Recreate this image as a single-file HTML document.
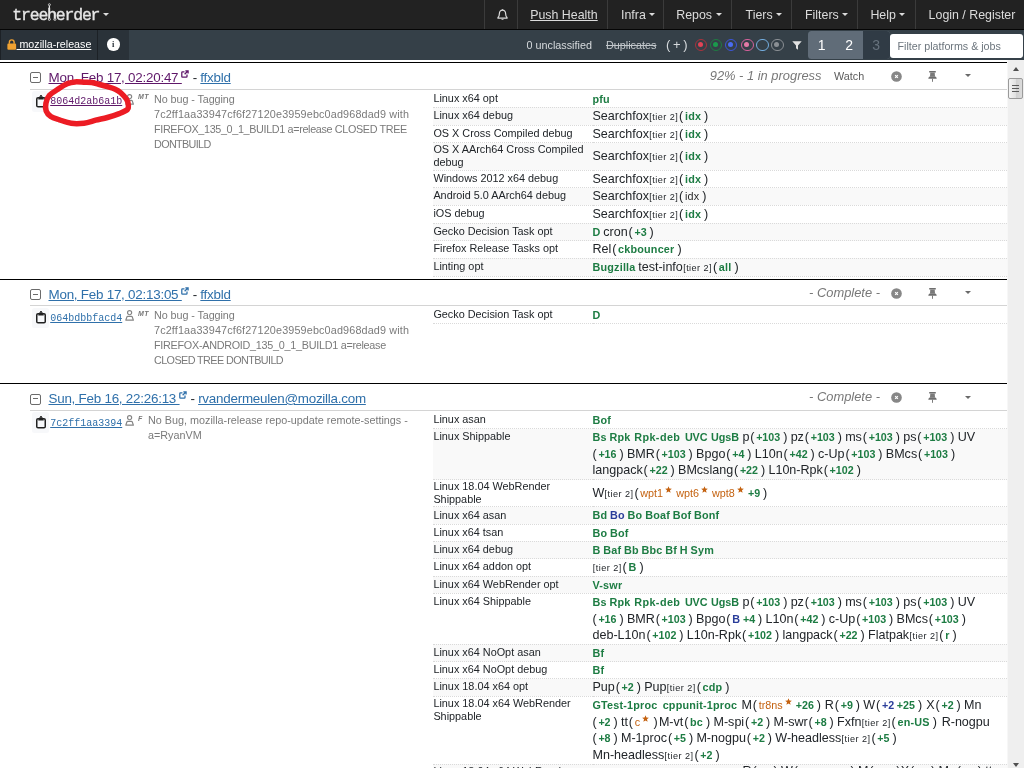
<!DOCTYPE html>
<html lang="en">
<head>
<meta charset="utf-8">
<title>Treeherder - mozilla-release</title>
<style>
*{box-sizing:border-box}
html,body{margin:0;padding:0;width:1024px;height:768px;overflow:hidden;background:#fff}
body{font-family:"Liberation Sans",sans-serif;font-size:12.6px;line-height:1.5;color:#212529;position:relative}
a{color:#2f70aa;text-decoration:underline}
a.v{color:#5f1769}
svg{display:inline-block}
/* ---------- top navbar ---------- */
#topnav{will-change:transform;position:absolute;left:0;top:0;width:1024px;height:30px;background:#222;border-bottom:1.5px solid #050505}
#logo{-webkit-text-stroke:.35px #e6e6e6;position:absolute;left:12.300px;top:5.400px;letter-spacing:-1.200px;font-family:"Liberation Mono","DejaVu Sans Mono",monospace;font-size:16.5px;color:#e6e6e6;line-height:22px;white-space:nowrap}
#logocar{position:absolute;left:103.200px;top:12.5px;width:0;height:0;border-left:3px solid transparent;border-right:3px solid transparent;border-top:3px solid #ddd}
#tree{position:absolute;left:44px;top:1px}
.tn{position:absolute;top:.7px;height:28.5px;line-height:28.5px;color:#dcdcdc;font-size:12.4px;white-space:nowrap}
.sepv{position:absolute;top:0;width:1px;height:28.5px;background:#3b3b3b}
.tn u{text-decoration:underline}
.tn .car{position:absolute;top:12.5px;right:-9.5px;width:0;height:0;border-left:3px solid transparent;border-right:3px solid transparent;border-top:3.200px solid #dcdcdc}
#bell{position:absolute;left:496.5px;top:8.5px}
/* ---------- second navbar ---------- */
#subnav{will-change:transform;position:absolute;left:0;top:30px;width:1024px;height:29.5px;background:#354048}
#repo{position:absolute;left:0;top:0;width:97.5px;height:29.5px;background:#2a3239;border-left:1px solid #1c2126;border-right:1px solid #1c2126;color:#fff;font-size:10.7px;line-height:29.5px;white-space:nowrap}
#repo span.t{position:absolute;left:15.5px;top:0;text-decoration:underline}
#lock{position:absolute;left:6px;top:8.5px}
#info{position:absolute;left:97.5px;top:0;width:31px;height:29.5px;background:#2a3239}
#info i{position:absolute;left:9.5px;top:8.200px;width:12.5px;height:12.5px;border-radius:50%;background:#fff;color:#2a3239;font:bold 8.5px/12.5px "Liberation Serif",serif;text-align:center;font-style:normal}
.sn{position:absolute;top:.8px;height:29.5px;line-height:29.5px;color:#d6dadd;font-size:10.8px;white-space:nowrap}
.sn.du{text-decoration:line-through;color:#c2c7cb}
.sn.pl{font-size:13px;top:-.5px;color:#d6dadd;letter-spacing:0}
.ring{position:absolute;top:8.600px;width:12.800px;height:12.800px;border-radius:50%;border:1.500px solid #888}
.ring i{position:absolute;left:2.400px;top:2.400px;width:5px;height:5px;border-radius:50%;background:#888}
#funnel{position:absolute;left:791.5px;top:10.5px}
#tiers{position:absolute;left:808px;top:.5px;width:81.5px;height:28.5px;border-radius:3.500px;background:#606c78;overflow:hidden}
#tiers span{position:absolute;top:0;height:28.5px;line-height:29.5px;color:#fff;font-size:14px;text-align:center}
#tiers .t3{left:55px;width:26.5px;background:#303b45;color:#66727d}
#filt{position:absolute;left:890px;top:3.5px;width:133px;height:24.5px;border-radius:3px;background:#fff;color:#6c757d;font-size:10.7px;line-height:24.5px;padding-left:7.5px;white-space:nowrap;overflow:hidden}
/* ---------- content ---------- */
#content{will-change:transform;position:absolute;left:0;top:61.8px;width:1007px;height:710px;overflow:hidden;background:#fff}
.push{position:relative;border-top:1.200px solid #000;margin:0 0 2.600px 0;padding:0}
.ph{position:relative;height:27px;margin-left:30px;border-bottom:1px solid #d4d4d4}
.colb{position:absolute;left:0;top:9.300px;width:11px;height:11px;border:1.200px solid #6b6b6b;border-radius:2px}
.colb i{position:absolute;left:2.200px;top:3.700px;width:4.500px;height:1.200px;background:#6b6b6b}
.date{position:absolute;left:18.5px;top:4.800px;letter-spacing:-.235px;font-size:13.400px;line-height:20px;white-space:nowrap;color:#212529}
.ext{width:7.900px;height:7.900px;vertical-align:3.900px;margin-left:-.550px;stroke:currentColor}
.stat{position:absolute;right:127px;top:3.100px;font-size:12.900px;line-height:20px;font-style:italic;color:#787878;white-space:nowrap}
.watch{position:absolute;left:804px;top:3px;font-size:10.800px;line-height:20px;color:#5a5a5a}
.ic1{position:absolute;left:861px;top:8.200px}
.ic2{position:absolute;left:897.800px;top:8.200px}
.ic3{position:absolute;left:934.700px;top:11.300px;width:0;height:0;border-left:3.200px solid transparent;border-right:3.200px solid transparent;border-top:3.400px solid #6a6a6a}
.xc{width:11px;height:11px;display:block}
.pin{width:9px;height:11px;display:block}
.pb{display:flex;align-items:flex-start}
.revs{width:394px;margin-left:30px;flex:none;position:relative;padding-bottom:12px}
.cb{position:absolute;left:2px;top:1.200px;width:16.800px;height:20.500px;background:#f7f8fa;border-radius:2.500px}
.clip{position:absolute;left:3.900px;top:3.900px;width:10px;height:12.500px}
.hash{position:absolute;left:20.200px;top:4.400px;font-family:"Liberation Mono","DejaVu Sans Mono",monospace;font-size:10px;line-height:15px;white-space:nowrap}
.usr{position:absolute;left:95.100px;top:3.800px;width:9.200px;height:10.800px}
.ini{position:absolute;left:108px;top:2.300px;font-size:7px;line-height:10px;font-style:italic;font-weight:bold;color:#777;letter-spacing:.3px}
.msg{display:block;padding-top:1.700px;font-size:10.800px;line-height:14.950px;color:#7a7a7a;white-space:nowrap}
.jobs{flex:1;margin:0;padding:0}
table.jt{table-layout:fixed;border-collapse:collapse;border-spacing:0;width:574px;margin:0.7px 0 0 9px}
.jt td{padding:0;vertical-align:top}
.jt tr{border-bottom:1px dotted #dadada}
.jt tr.even{background:#f9f9f9}
.jt tr.s1 td.pl{padding-top:1.100px}
.jt td.pl{width:159.500px;padding:0 0 0 0.400px;font-size:10.850px;line-height:13.200px;color:#212529;white-space:nowrap}
.jt td.jb{vertical-align:middle;font-size:10.800px;line-height:16.200px;color:#212529;padding:0 12px 0 0}
.j{display:inline-block;font-size:10.800px;font-weight:bold;margin:0 2.750px 0 0;white-space:nowrap;letter-spacing:.2px}
.j.n{letter-spacing:0;font-size:10.700px}
.j.g{color:#1d7c43}
.j.b{color:#2a3d9a}
.j.o{color:#c46210;font-weight:normal;margin-right:4.250px;letter-spacing:0}
.j.r{color:#2a2a2a;font-weight:normal}
.last .j{position:relative;top:1.300px}
.grp{margin-right:3.350px;margin-left:-.050px}
.gc{display:inline-block;white-space:nowrap}
.gs{display:inline-block;white-space:nowrap;margin-right:.900px;font-size:12.550px;line-height:16.650px}
.gs small{font-size:9.100px;line-height:1;letter-spacing:.46px;margin-left:.3px}
.p{display:inline-block;margin:0;font-size:12.550px;line-height:16.650px}
.p.o{margin-right:1.700px;margin-left:0}
.p.c{margin-left:.200px}
.star{width:7px;height:7px;vertical-align:3.5px;margin-left:1.800px;fill:#c46210}
/* ---------- scrollbar ---------- */
#sb{position:absolute;left:1007px;top:59.5px;width:17px;height:709px;background:#efefef;border-left:1px solid #f7f7f7}
#sb .up{position:absolute;left:4.700px;top:7.300px;width:0;height:0;border-left:3.5px solid transparent;border-right:3.5px solid transparent;border-bottom:4px solid #505050}
#sb .dn{position:absolute;left:4.5px;top:703px;width:0;height:0;border-left:3.5px solid transparent;border-right:3.5px solid transparent;border-top:4px solid #505050}
#sb .thumb{position:absolute;left:.3px;top:18.700px;width:14.500px;height:20.600px;border:1px solid #9a9a9a;border-radius:2px;background:linear-gradient(90deg,#f4f4f4 0%,#e2e2e2 50%,#cfcfcf 51%,#dcdcdc 100%)}
#sb .thumb i{position:absolute;left:3.200px;width:6.5px;height:1px;background:#5a5a5a}
#sb .thumb i:nth-child(1){top:5.600px}
#sb .thumb i:nth-child(2){top:8.600px}
#sb .thumb i:nth-child(3){top:11.600px}
#scrib{position:absolute;left:38px;top:74px;pointer-events:none}

</style>
</head>
<body>
<div id="topnav">
  <div id="logo">treeherder</div>
  <svg id="tree" width="14" height="22" viewBox="0 0 14 22"><path d="M5.400 4.200V17.700M11 11.500v6.200" fill="none" stroke="#e6e6e6" stroke-width="1.200"/><circle cx="5.400" cy="3.700" r="1" fill="#222" stroke="#e6e6e6" stroke-width=".8"/><circle cx="5.400" cy="18.300" r="1" fill="#222" stroke="#e6e6e6" stroke-width=".8"/><circle cx="11" cy="18.300" r="1" fill="#222" stroke="#e6e6e6" stroke-width=".8"/></svg>
  <span id="logocar"></span>
  <span class="sepv" style="left:484px"></span>
  <svg id="bell" width="11" height="12" viewBox="0 0 11 12"><path d="M5.500 1.200c-1.900 0-3.100 1.400-3.100 3.300 0 2.400-.7 3.300-1.400 4v.6h9v-.6c-.7-.7-1.400-1.600-1.400-4 0-1.900-1.200-3.300-3.100-3.300z" fill="none" stroke="#dcdcdc" stroke-width="1.200"/><path d="M4.300 10.200a1.250 1.250 0 0 0 2.400 0z" fill="#dcdcdc"/><path d="M5.500 0.300v1" stroke="#dcdcdc" stroke-width="1.200"/></svg>
  <span class="sepv" style="left:517px"></span>
  <span class="tn" style="left:530.200px"><u>Push Health</u></span>
  <span class="sepv" style="left:607px"></span>
  <span class="tn" style="left:621px">Infra<span class="car"></span></span>
  <span class="sepv" style="left:663px"></span>
  <span class="tn" style="left:676.200px">Repos<span class="car"></span></span>
  <span class="sepv" style="left:731px"></span>
  <span class="tn" style="left:745.600px">Tiers<span class="car"></span></span>
  <span class="sepv" style="left:791px"></span>
  <span class="tn" style="left:805px">Filters<span class="car"></span></span>
  <span class="sepv" style="left:857px"></span>
  <span class="tn" style="left:870.400px">Help<span class="car"></span></span>
  <span class="sepv" style="left:915px"></span>
  <span class="tn" style="left:928.600px">Login / Register</span>
</div>
<div id="subnav">
  <div id="repo"><svg id="lock" width="9.500" height="11" viewBox="0 0 10 11.500"><path d="M2.500 5V3.400a2.500 2.500 0 0 1 5 0V5" fill="none" stroke="#f0a232" stroke-width="1.500"/><rect x=".4" y="4.800" width="9.200" height="6.500" rx="1.100" fill="#f0a232"/></svg><span class="t">&nbsp;mozilla-release</span></div>
  <div id="info"><i>i</i></div>
  <span class="sn" style="left:526.5px">0 unclassified</span>
  <span class="sn du" style="left:606px">Duplicates</span>
  <span class="sn pl" style="left:666px">(&thinsp;+&thinsp;)</span>
  <span class="ring" style="left:694.600px;border-color:#a8323c"><i style="background:#e04356"></i></span>
  <span class="ring" style="left:709.600px;border-color:#1f7a42"><i style="background:#1b9a4c"></i></span>
  <span class="ring" style="left:724.600px;border-color:#3c55d8"><i style="background:#4a6cf2"></i></span>
  <span class="ring" style="left:740.900px;border-color:#d2609a"><i style="background:#e47aa6"></i></span>
  <span class="ring" style="left:755.900px;border-color:#74aee0"></span>
  <span class="ring" style="left:770.900px;border-color:#8a8f94"><i style="background:#8a8f94"></i></span>
  <svg id="funnel" width="10" height="9" viewBox="0 0 10 9"><path d="M.3.300h9.400L6 4.600V8.700L4 7.300V4.600z" fill="#e2e2e2"/></svg>
  <div id="tiers"><span style="left:0;width:27.5px">1</span><span style="left:27.5px;width:27.5px">2</span><span class="t3">3</span></div>
  <div id="filt">Filter platforms &amp; jobs</div>
</div>

<div id="content">
<div class="push">
<div class="ph"><span class="colb"><i></i></span><span class="date"><a class="v">Mon, Feb 17, 02:20:47 <svg class="ext" viewBox="0 0 10 10"><path d="M5.5 1h3.5v3.5M9 1L4.6 5.4M7.6 5.6v2.6a.8.8 0 0 1-.8.8H1.8a.8.8 0 0 1-.8-.8V3.200a.8.8 0 0 1 .8-.8h2.600" fill="none" stroke-width="1.600"/></svg></a> - <a>ffxbld</a></span><span class="stat" style="right:185.5px">92% - 1 in progress</span><span class="watch">Watch</span><span class="ic1"><svg class="xc" viewBox="0 0 12 12"><circle cx="6" cy="6" r="5.800" fill="#878787"/><path d="M4.500 4.500l3 3M7.500 4.500l-3 3" stroke="#fff" stroke-width="1.250"/></svg></span><span class="ic2"><svg class="pin" viewBox="0 0 9 11"><rect x="1.100" y="0" width="6.800" height="1.600" rx=".5" fill="#6e6e6e"/><path d="M2.300 1.500H6.700L7 5.300H2z" fill="#7a7a7a"/><path d="M.3 7.700C.3 6.100 1.500 5.200 2.500 5.200H6.500C7.500 5.200 8.700 6.100 8.700 7.700z" fill="#6e6e6e"/><rect x="4.050" y="7.600" width=".9" height="3.200" fill="#6e6e6e"/></svg></span><span class="ic3"></span></div>
<div class="pb">
<div class="revs"><span class="cb"><svg class="clip" viewBox="0 0 10 12.5"><rect x=".75" y="2.650" width="8.500" height="9.100" rx="1.300" fill="none" stroke="#202020" stroke-width="1.500"/><path d="M2.200 4.400L2.900 1.900Q3 1.400 3.600 1.400H3.800Q3.900 0 5 0Q6.100 0 6.200 1.400H6.400Q7 1.400 7.100 1.900L7.800 4.400z" fill="#202020"/><circle cx="5" cy="1.300" r=".42" fill="#e8e8ea"/></svg></span><a class="hash v">8064d2ab6a1b</a><svg class="usr" viewBox="0 0 9.200 10.800"><circle cx="4.600" cy="2.700" r="2.050" fill="none" stroke="#858585" stroke-width="1.200"/><path d="M.8 10.100L2 6.700Q2.200 6.300 2.800 6.300H6.400Q7 6.300 7.200 6.700L8.400 10.100z" fill="none" stroke="#858585" stroke-width="1.200" stroke-linejoin="round"/></svg><span class="ini">MT</span><span class="msg" style="margin-left:124px"><span style="letter-spacing:-.085px">No bug - Tagging</span><br><span style="letter-spacing:.15px">7c2ff1aa33947cf6f27120e3959ebc0ad968dad9 with</span><br><span style="letter-spacing:-.35px">FIREFOX_135_0_1_BUILD1 a=release CLOSED TREE</span><br><span style="letter-spacing:-.64px">DONTBUILD</span></span></div>
<div class="jobs">
<table class="jt">
<tr class="odd s1"><td class="pl">Linux x64 opt</td><td class="jb"><span class="j g">pfu</span></td></tr>
<tr class="even s1"><td class="pl">Linux x64 debug</td><td class="jb"><span class="grp"><span class="gs">Searchfox<small>[tier 2]</small></span><span class="gc"><span class="p o">(</span><span class="j g">idx</span><span class="p c">)</span></span></span></td></tr>
<tr class="odd s1"><td class="pl">OS X Cross Compiled debug</td><td class="jb"><span class="grp"><span class="gs">Searchfox<small>[tier 2]</small></span><span class="gc"><span class="p o">(</span><span class="j g">idx</span><span class="p c">)</span></span></span></td></tr>
<tr class="even"><td class="pl">OS X AArch64 Cross Compiled<br>debug</td><td class="jb"><span class="grp"><span class="gs">Searchfox<small>[tier 2]</small></span><span class="gc"><span class="p o">(</span><span class="j g">idx</span><span class="p c">)</span></span></span></td></tr>
<tr class="odd s1"><td class="pl">Windows 2012 x64 debug</td><td class="jb"><span class="grp"><span class="gs">Searchfox<small>[tier 2]</small></span><span class="gc"><span class="p o">(</span><span class="j g">idx</span><span class="p c">)</span></span></span></td></tr>
<tr class="even s1"><td class="pl">Android 5.0 AArch64 debug</td><td class="jb"><span class="grp"><span class="gs">Searchfox<small>[tier 2]</small></span><span class="gc"><span class="p o">(</span><span class="j r">idx</span><span class="p c">)</span></span></span></td></tr>
<tr class="odd s1"><td class="pl">iOS debug</td><td class="jb"><span class="grp"><span class="gs">Searchfox<small>[tier 2]</small></span><span class="gc"><span class="p o">(</span><span class="j g">idx</span><span class="p c">)</span></span></span></td></tr>
<tr class="even s1"><td class="pl">Gecko Decision Task opt</td><td class="jb"><span class="j g">D</span><span class="grp"><span class="gs">cron</span><span class="gc"><span class="p o">(</span><span class="j g n">+3</span><span class="p c">)</span></span></span></td></tr>
<tr class="odd s1"><td class="pl">Firefox Release Tasks opt</td><td class="jb"><span class="grp"><span class="gs">Rel</span><span class="gc"><span class="p o">(</span><span class="j g">ckbouncer</span><span class="p c">)</span></span></span></td></tr>
<tr class="even s1"><td class="pl">Linting opt</td><td class="jb"><span class="j g">Bugzilla</span><span class="grp"><span class="gs">test-info<small>[tier 2]</small></span><span class="gc"><span class="p o">(</span><span class="j g">all</span><span class="p c">)</span></span></span></td></tr>
</table>
</div>
</div>
</div>
<div class="push">
<div class="ph" style="height:26.2px"><span class="colb"><i></i></span><span class="date"><a class="">Mon, Feb 17, 02:13:05 <svg class="ext" viewBox="0 0 10 10"><path d="M5.5 1h3.5v3.5M9 1L4.6 5.4M7.6 5.6v2.6a.8.8 0 0 1-.8.8H1.8a.8.8 0 0 1-.8-.8V3.200a.8.8 0 0 1 .8-.8h2.600" fill="none" stroke-width="1.600"/></svg></a> - <a>ffxbld</a></span><span class="stat">- Complete -</span><span class="ic1"><svg class="xc" viewBox="0 0 12 12"><circle cx="6" cy="6" r="5.800" fill="#878787"/><path d="M4.500 4.500l3 3M7.500 4.500l-3 3" stroke="#fff" stroke-width="1.250"/></svg></span><span class="ic2"><svg class="pin" viewBox="0 0 9 11"><rect x="1.100" y="0" width="6.800" height="1.600" rx=".5" fill="#6e6e6e"/><path d="M2.300 1.500H6.700L7 5.300H2z" fill="#7a7a7a"/><path d="M.3 7.700C.3 6.100 1.500 5.200 2.500 5.200H6.500C7.500 5.200 8.700 6.100 8.700 7.700z" fill="#6e6e6e"/><rect x="4.050" y="7.600" width=".9" height="3.200" fill="#6e6e6e"/></svg></span><span class="ic3"></span></div>
<div class="pb">
<div class="revs" style="padding-bottom:12.8px"><span class="cb"><svg class="clip" viewBox="0 0 10 12.5"><rect x=".75" y="2.650" width="8.500" height="9.100" rx="1.300" fill="none" stroke="#202020" stroke-width="1.500"/><path d="M2.200 4.400L2.900 1.900Q3 1.400 3.600 1.400H3.800Q3.900 0 5 0Q6.100 0 6.200 1.400H6.400Q7 1.400 7.100 1.900L7.800 4.400z" fill="#202020"/><circle cx="5" cy="1.300" r=".42" fill="#e8e8ea"/></svg></span><a class="hash">064bdbbfacd4</a><svg class="usr" viewBox="0 0 9.200 10.800"><circle cx="4.600" cy="2.700" r="2.050" fill="none" stroke="#858585" stroke-width="1.200"/><path d="M.8 10.100L2 6.700Q2.200 6.300 2.800 6.300H6.400Q7 6.300 7.200 6.700L8.400 10.100z" fill="none" stroke="#858585" stroke-width="1.200" stroke-linejoin="round"/></svg><span class="ini">MT</span><span class="msg" style="margin-left:124px"><span style="letter-spacing:-.085px">No bug - Tagging</span><br><span style="letter-spacing:.15px">7c2ff1aa33947cf6f27120e3959ebc0ad968dad9 with</span><br><span style="letter-spacing:-.27px">FIREFOX-ANDROID_135_0_1_BUILD1 a=release</span><br><span style="letter-spacing:-.59px">CLOSED TREE DONTBUILD</span></span></div>
<div class="jobs">
<table class="jt">
<tr class="odd s1"><td class="pl">Gecko Decision Task opt</td><td class="jb"><span class="j g">D</span></td></tr>
</table>
</div>
</div>
</div>
<div class="push">
<div class="ph"><span class="colb"><i></i></span><span class="date"><a class="">Sun, Feb 16, 22:26:13 <svg class="ext" viewBox="0 0 10 10"><path d="M5.5 1h3.5v3.5M9 1L4.6 5.4M7.6 5.6v2.6a.8.8 0 0 1-.8.8H1.8a.8.8 0 0 1-.8-.8V3.200a.8.8 0 0 1 .8-.8h2.600" fill="none" stroke-width="1.600"/></svg></a> - <a>rvandermeulen@mozilla.com</a></span><span class="stat">- Complete -</span><span class="ic1"><svg class="xc" viewBox="0 0 12 12"><circle cx="6" cy="6" r="5.800" fill="#878787"/><path d="M4.500 4.500l3 3M7.500 4.500l-3 3" stroke="#fff" stroke-width="1.250"/></svg></span><span class="ic2"><svg class="pin" viewBox="0 0 9 11"><rect x="1.100" y="0" width="6.800" height="1.600" rx=".5" fill="#6e6e6e"/><path d="M2.300 1.500H6.700L7 5.300H2z" fill="#7a7a7a"/><path d="M.3 7.700C.3 6.100 1.500 5.200 2.500 5.200H6.500C7.500 5.200 8.700 6.100 8.700 7.700z" fill="#6e6e6e"/><rect x="4.050" y="7.600" width=".9" height="3.200" fill="#6e6e6e"/></svg></span><span class="ic3"></span></div>
<div class="pb">
<div class="revs"><span class="cb"><svg class="clip" viewBox="0 0 10 12.5"><rect x=".75" y="2.650" width="8.500" height="9.100" rx="1.300" fill="none" stroke="#202020" stroke-width="1.500"/><path d="M2.200 4.400L2.900 1.900Q3 1.400 3.600 1.400H3.800Q3.900 0 5 0Q6.100 0 6.200 1.400H6.400Q7 1.400 7.100 1.900L7.800 4.400z" fill="#202020"/><circle cx="5" cy="1.300" r=".42" fill="#e8e8ea"/></svg></span><a class="hash">7c2ff1aa3394</a><svg class="usr" viewBox="0 0 9.200 10.800"><circle cx="4.600" cy="2.700" r="2.050" fill="none" stroke="#858585" stroke-width="1.200"/><path d="M.8 10.100L2 6.700Q2.200 6.300 2.800 6.300H6.400Q7 6.300 7.200 6.700L8.400 10.100z" fill="none" stroke="#858585" stroke-width="1.200" stroke-linejoin="round"/></svg><span class="ini">F</span><span class="msg" style="margin-left:118px">No Bug, mozilla-release repo-update remote-settings -<br>a=RyanVM</span></div>
<div class="jobs">
<table class="jt">
<tr class="odd s1"><td class="pl">Linux asan</td><td class="jb"><span class="j g">Bof</span></td></tr>
<tr class="even s1"><td class="pl">Linux Shippable</td><td class="jb"><span class="j g">Bs</span><span class="j g">Rpk</span><span class="j g" style="letter-spacing:.42px;margin-left:1px;">Rpk-deb</span><span class="j g" style="letter-spacing:-.1px;margin-left:1.8px;">UVC</span><span class="j g" style="letter-spacing:-.1px;margin-left:.9px;">UgsB</span><span class="grp" style="margin-left:.8px"><span class="gs">p</span><span class="gc"><span class="p o">(</span><span class="j g n">+103</span><span class="p c">)</span></span></span><span class="grp"><span class="gs">pz</span><span class="gc"><span class="p o">(</span><span class="j g n">+103</span><span class="p c">)</span></span></span><span class="grp"><span class="gs">ms</span><span class="gc"><span class="p o">(</span><span class="j g n">+103</span><span class="p c">)</span></span></span><span class="grp"><span class="gs">ps</span><span class="gc"><span class="p o">(</span><span class="j g n">+103</span><span class="p c">)</span></span></span><span class="grp"><span class="gs">UV</span><span class="gc"><span class="p o">(</span><span class="j g n">+16</span><span class="p c">)</span></span></span><span class="grp"><span class="gs">BMR</span><span class="gc"><span class="p o">(</span><span class="j g n">+103</span><span class="p c">)</span></span></span><span class="grp"><span class="gs">Bpgo</span><span class="gc"><span class="p o">(</span><span class="j g n">+4</span><span class="p c">)</span></span></span><span class="grp"><span class="gs">L10n</span><span class="gc"><span class="p o">(</span><span class="j g n">+42</span><span class="p c">)</span></span></span><span class="grp"><span class="gs">c-Up</span><span class="gc"><span class="p o">(</span><span class="j g n">+103</span><span class="p c">)</span></span></span><span class="grp"><span class="gs">BMcs</span><span class="gc"><span class="p o">(</span><span class="j g n">+103</span><span class="p c">)</span></span></span><span class="grp"><span class="gs">langpack</span><span class="gc"><span class="p o">(</span><span class="j g n">+22</span><span class="p c">)</span></span></span><span class="grp"><span class="gs">BMcslang</span><span class="gc"><span class="p o">(</span><span class="j g n">+22</span><span class="p c">)</span></span></span><span class="grp"><span class="gs">L10n-Rpk</span><span class="gc"><span class="p o">(</span><span class="j g n">+102</span><span class="p c">)</span></span></span></td></tr>
<tr class="odd"><td class="pl">Linux 18.04 WebRender<br>Shippable</td><td class="jb"><span class="grp"><span class="gs">W<small>[tier 2]</small></span><span class="gc"><span class="p o">(</span><span class="j o">wpt1<svg class="star" viewBox="0 0 10 10"><polygon points="5,0.3 6.3,3.6 9.8,3.8 7.1,6.1 8,9.6 5,7.7 2,9.6 2.9,6.1 0.2,3.8 3.7,3.6"/></svg></span><span class="j o">wpt6<svg class="star" viewBox="0 0 10 10"><polygon points="5,0.3 6.3,3.6 9.8,3.8 7.1,6.1 8,9.6 5,7.7 2,9.6 2.9,6.1 0.2,3.8 3.7,3.6"/></svg></span><span class="j o">wpt8<svg class="star" viewBox="0 0 10 10"><polygon points="5,0.3 6.3,3.6 9.8,3.8 7.1,6.1 8,9.6 5,7.7 2,9.6 2.9,6.1 0.2,3.8 3.7,3.6"/></svg></span><span class="j g n">+9</span><span class="p c">)</span></span></span></td></tr>
<tr class="even s1"><td class="pl">Linux x64 asan</td><td class="jb"><span class="j g">Bd</span><span class="j b">Bo</span><span class="j g">Bo</span><span class="j g">Boaf</span><span class="j g">Bof</span><span class="j g">Bonf</span></td></tr>
<tr class="odd s1"><td class="pl">Linux x64 tsan</td><td class="jb"><span class="j g">Bo</span><span class="j g">Bof</span></td></tr>
<tr class="even s1"><td class="pl">Linux x64 debug</td><td class="jb"><span class="j g">B</span><span class="j g">Baf</span><span class="j g">Bb</span><span class="j g">Bbc</span><span class="j g">Bf</span><span class="j g">H</span><span class="j g">Sym</span></td></tr>
<tr class="odd s1"><td class="pl">Linux x64 addon opt</td><td class="jb"><span class="grp"><span class="gs"><small>[tier 2]</small></span><span class="gc"><span class="p o">(</span><span class="j g">B</span><span class="p c">)</span></span></span></td></tr>
<tr class="even s1"><td class="pl">Linux x64 WebRender opt</td><td class="jb"><span class="j g">V-swr</span></td></tr>
<tr class="odd s1"><td class="pl">Linux x64 Shippable</td><td class="jb"><span class="j g">Bs</span><span class="j g">Rpk</span><span class="j g" style="letter-spacing:.42px;margin-left:1px;">Rpk-deb</span><span class="j g" style="letter-spacing:-.1px;margin-left:1.8px;">UVC</span><span class="j g" style="letter-spacing:-.1px;margin-left:.9px;">UgsB</span><span class="grp" style="margin-left:.8px"><span class="gs">p</span><span class="gc"><span class="p o">(</span><span class="j g n">+103</span><span class="p c">)</span></span></span><span class="grp"><span class="gs">pz</span><span class="gc"><span class="p o">(</span><span class="j g n">+103</span><span class="p c">)</span></span></span><span class="grp"><span class="gs">ms</span><span class="gc"><span class="p o">(</span><span class="j g n">+103</span><span class="p c">)</span></span></span><span class="grp"><span class="gs">ps</span><span class="gc"><span class="p o">(</span><span class="j g n">+103</span><span class="p c">)</span></span></span><span class="grp"><span class="gs">UV</span><span class="gc"><span class="p o">(</span><span class="j g n">+16</span><span class="p c">)</span></span></span><span class="grp"><span class="gs">BMR</span><span class="gc"><span class="p o">(</span><span class="j g n">+103</span><span class="p c">)</span></span></span><span class="grp"><span class="gs">Bpgo</span><span class="gc"><span class="p o">(</span><span class="j b">B</span><span class="j g n">+4</span><span class="p c">)</span></span></span><span class="grp"><span class="gs">L10n</span><span class="gc"><span class="p o">(</span><span class="j g n">+42</span><span class="p c">)</span></span></span><span class="grp"><span class="gs">c-Up</span><span class="gc"><span class="p o">(</span><span class="j g n">+103</span><span class="p c">)</span></span></span><span class="grp"><span class="gs">BMcs</span><span class="gc"><span class="p o">(</span><span class="j g n">+103</span><span class="p c">)</span></span></span><span class="grp"><span class="gs">deb-L10n</span><span class="gc"><span class="p o">(</span><span class="j g n">+102</span><span class="p c">)</span></span></span><span class="grp"><span class="gs">L10n-Rpk</span><span class="gc"><span class="p o">(</span><span class="j g n">+102</span><span class="p c">)</span></span></span><span class="grp"><span class="gs">langpack</span><span class="gc"><span class="p o">(</span><span class="j g n">+22</span><span class="p c">)</span></span></span><span class="grp"><span class="gs">Flatpak<small>[tier 2]</small></span><span class="gc"><span class="p o">(</span><span class="j g">r</span><span class="p c">)</span></span></span></td></tr>
<tr class="even s1"><td class="pl">Linux x64 NoOpt asan</td><td class="jb"><span class="j g">Bf</span></td></tr>
<tr class="odd s1"><td class="pl">Linux x64 NoOpt debug</td><td class="jb"><span class="j g">Bf</span></td></tr>
<tr class="even s1"><td class="pl">Linux 18.04 x64 opt</td><td class="jb"><span class="grp"><span class="gs">Pup</span><span class="gc"><span class="p o">(</span><span class="j g n">+2</span><span class="p c">)</span></span></span><span class="grp"><span class="gs">Pup<small>[tier 2]</small></span><span class="gc"><span class="p o">(</span><span class="j g">cdp</span><span class="p c">)</span></span></span></td></tr>
<tr class="odd"><td class="pl">Linux 18.04 x64 WebRender<br>Shippable</td><td class="jb"><span class="j g">GTest-1proc</span><span class="j g" style="margin-left:2.4px;">cppunit-1proc</span><span class="grp" style="margin-left:1.5px"><span class="gs">M</span><span class="gc"><span class="p o">(</span><span class="j o">tr8ns<svg class="star" viewBox="0 0 10 10"><polygon points="5,0.3 6.3,3.6 9.8,3.8 7.1,6.1 8,9.6 5,7.7 2,9.6 2.9,6.1 0.2,3.8 3.7,3.6"/></svg></span><span class="j g n">+26</span><span class="p c">)</span></span></span><span class="grp" style="margin-left:.5px"><span class="gs">R</span><span class="gc"><span class="p o">(</span><span class="j g n">+9</span><span class="p c">)</span></span></span><span class="grp"><span class="gs">W</span><span class="gc"><span class="p o">(</span><span class="j b n">+2</span><span class="j g n">+25</span><span class="p c">)</span></span></span><span class="grp" style="margin-left:.8px"><span class="gs">X</span><span class="gc"><span class="p o">(</span><span class="j g n">+2</span><span class="p c">)</span></span></span><span class="grp"><span class="gs">Mn</span><span class="gc"><span class="p o">(</span><span class="j g n">+2</span><span class="p c">)</span></span></span><span class="grp"><span class="gs">tt</span><span class="gc"><span class="p o">(</span><span class="j o">c<svg class="star" viewBox="0 0 10 10"><polygon points="5,0.3 6.3,3.6 9.8,3.8 7.1,6.1 8,9.6 5,7.7 2,9.6 2.9,6.1 0.2,3.8 3.7,3.6"/></svg></span><span class="p c">)</span></span></span><span class="grp" style="margin-left:-2px"><span class="gs">M-vt</span><span class="gc"><span class="p o">(</span><span class="j g">bc</span><span class="p c">)</span></span></span><span class="grp"><span class="gs">M-spi</span><span class="gc"><span class="p o">(</span><span class="j g n">+2</span><span class="p c">)</span></span></span><span class="grp"><span class="gs">M-swr</span><span class="gc"><span class="p o">(</span><span class="j g n">+8</span><span class="p c">)</span></span></span><span class="grp"><span class="gs">Fxfn<small>[tier 2]</small></span><span class="gc"><span class="p o">(</span><span class="j g">en-US</span><span class="p c">)</span></span></span><span class="grp" style="margin-left:1.5px"><span class="gs">R-nogpu</span><span class="gc"><span class="p o">(</span><span class="j g n">+8</span><span class="p c">)</span></span></span><span class="grp"><span class="gs">M-1proc</span><span class="gc"><span class="p o">(</span><span class="j g n">+5</span><span class="p c">)</span></span></span><span class="grp"><span class="gs">M-nogpu</span><span class="gc"><span class="p o">(</span><span class="j g n">+2</span><span class="p c">)</span></span></span><span class="grp"><span class="gs">W-headless<small>[tier 2]</small></span><span class="gc"><span class="p o">(</span><span class="j g n">+5</span><span class="p c">)</span></span></span><span class="grp"><span class="gs">Mn-headless<small>[tier 2]</small></span><span class="gc"><span class="p o">(</span><span class="j g n">+2</span><span class="p c">)</span></span></span></td></tr>
<tr class="even"><td class="pl">Linux 18.04 x64 WebRender<br>debug</td><td class="jb last" style="vertical-align:top"><div style="margin-top:-1.500px"><span class="j g">GTest-1proc</span><span class="j g" style="margin-left:2.4px;">cppunit-1proc</span><span class="grp" style="margin-left:2.5px"><span class="gs">R</span><span class="gc"><span class="p o">(</span><span class="j g n">+9</span><span class="p c">)</span></span></span><span class="grp"><span class="gs">W</span><span class="gc"><span class="p o">(</span><span class="j g n">+2</span><span class="j b n">+25</span><span class="j g n">+2</span><span class="p c">)</span></span></span><span class="grp"><span class="gs">M</span><span class="gc"><span class="p o">(</span><span class="j g n">+26</span><span class="p c">)</span></span></span><span class="grp" style="margin-left:-3px"><span class="gs">X</span><span class="gc"><span class="p o">(</span><span class="j g n">+2</span><span class="p c">)</span></span></span><span class="grp"><span class="gs">Mn</span><span class="gc"><span class="p o">(</span><span class="j g n">+2</span><span class="p c">)</span></span></span><span class="grp"><span class="gs">tt</span><span class="gc"><span class="p o">(</span><span class="j g">c</span><span class="p c">)</span></span></span><span class="grp"><span class="gs">M-vt</span><span class="gc"><span class="p o">(</span><span class="j g">bc</span><span class="p c">)</span></span></span><span class="grp"><span class="gs">M-spi</span><span class="gc"><span class="p o">(</span><span class="j g n">+2</span><span class="p c">)</span></span></span><span class="grp"><span class="gs">M-swr</span><span class="gc"><span class="p o">(</span><span class="j g n">+8</span><span class="p c">)</span></span></span><span class="grp"><span class="gs">Fxfn<small>[tier 2]</small></span><span class="gc"><span class="p o">(</span><span class="j g">en-US</span><span class="p c">)</span></span></span><span class="grp"><span class="gs">R-nogpu</span><span class="gc"><span class="p o">(</span><span class="j g n">+8</span><span class="p c">)</span></span></span><span class="grp"><span class="gs">M-1proc</span><span class="gc"><span class="p o">(</span><span class="j g n">+5</span><span class="p c">)</span></span></span><span class="grp"><span class="gs">M-nogpu</span><span class="gc"><span class="p o">(</span><span class="j g n">+2</span><span class="p c">)</span></span></span><span class="grp"><span class="gs">W-headless<small>[tier 2]</small></span><span class="gc"><span class="p o">(</span><span class="j g n">+5</span><span class="p c">)</span></span></span></div></td></tr>
</table>
</div>
</div>
</div>

</div>
<div id="sb"><span class="up"></span><span class="thumb"><i></i><i></i><i></i></span><span class="dn"></span></div>
<svg id="scrib" width="100" height="58" viewBox="0 0 100 58"><path d="M29.2 9.7C31.9 8.7 34.3 8.2 37.1 7.9C39.9 7.7 43.2 8.1 46.0 8.2C48.8 8.3 51.2 8.1 53.8 8.5C56.4 8.9 59.0 9.8 61.6 10.5C64.2 11.2 66.8 11.9 69.4 12.7C72.0 13.5 75.0 14.3 77.2 15.3C79.5 16.3 80.8 17.0 82.7 18.7C84.6 20.4 87.3 23.3 88.6 25.3C89.9 27.3 90.2 29.1 90.3 30.8C90.4 32.5 90.9 34.0 89.4 35.5C87.9 37.0 84.5 38.3 81.2 39.6C77.9 40.9 73.3 42.4 69.4 43.5C65.5 44.6 61.6 45.2 57.7 46.2C53.8 47.2 50.1 48.7 46.0 49.2C41.9 49.7 37.3 49.9 33.2 49.3C29.1 48.7 24.8 46.9 21.4 45.8C18.0 44.7 15.0 44.0 12.8 42.5C10.6 41.0 9.0 39.2 8.2 37.0C7.4 34.8 7.4 31.8 7.9 29.2C8.4 26.7 9.1 23.9 11.4 21.4C13.6 18.9 18.4 16.2 21.4 14.2C24.4 12.2 26.6 10.8 29.2 9.7Z" fill="none" stroke="#ec1c24" stroke-width="5.5" stroke-linecap="round" stroke-linejoin="round"/></svg>
</body>
</html>
